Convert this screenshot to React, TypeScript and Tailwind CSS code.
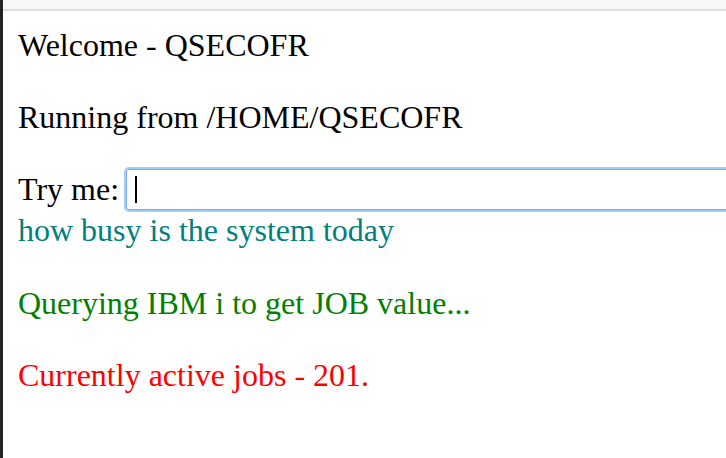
export default function App() {
  return (
    <div className="flex h-[458px] w-[726px] overflow-hidden bg-white font-['Liberation_Serif',serif] text-[32px] text-black">
      {/* dark window edge */}
      <div className="w-[3px] shrink-0 bg-[#242424]" />

      <div className="flex min-w-0 flex-1 flex-col overflow-hidden">
        {/* top strip */}
        <div className="h-[11px] shrink-0 border-b-2 border-[#dedede] bg-[#f7f7f7]" />

        <div className="flex flex-col pl-[15px] pt-[10px]">
          <p className="leading-[48px]">Welcome - QSECOFR</p>
          <p className="mt-[24px] leading-[48px]">Running from /HOME/QSECOFR</p>

          <div className="mt-[24px] -mr-[12px] flex h-[48px] items-center whitespace-nowrap">
            <span>Try me:</span>
            <div className="ml-[7px] flex h-[41px] flex-1 items-center rounded-[3px] border border-[#7aaae2] pl-[8px] shadow-[0_0_0_2px_#a3cdf7]">
              <span className="h-[27px] w-[2px] bg-black" />
            </div>
          </div>
          <p className="mt-[3px] leading-[28px] text-[#008080]">how busy is the system today</p>

          <p className="mt-[35px] leading-[48px] text-[#008000]">Querying IBM i to get JOB value...</p>
          <p className="mt-[24px] leading-[48px] text-[#ff0000]">Currently active jobs - 201.</p>
        </div>
      </div>
    </div>
  );
}
